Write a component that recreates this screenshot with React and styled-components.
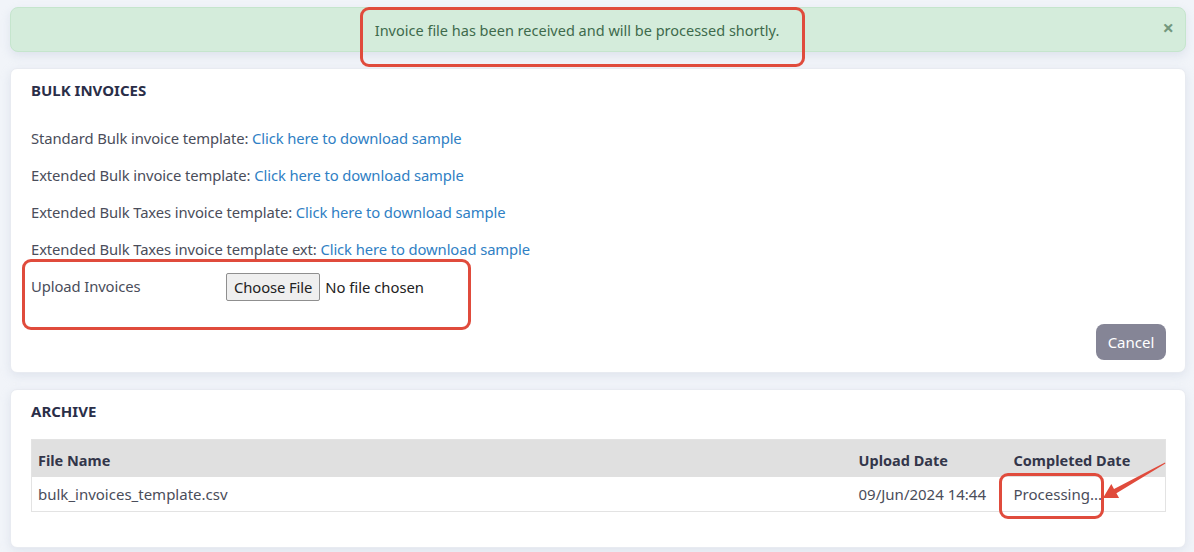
import React from 'react'
import styled, { createGlobalStyle } from 'styled-components'

const GlobalStyle = createGlobalStyle`
  html, body {
    margin: 0;
    padding: 0;
    background: #f1f4f9;
    font-family: "Noto Sans", "Open Sans", Arial, sans-serif;
    color: #4a4d5a;
  }
`

const Page = styled.div`
  position: relative;
  width: 1194px;
  height: 552px;
  padding: 7px 8px 0 10px;
  box-sizing: border-box;
  display: flex;
  flex-direction: column;
  gap: 16px;
`

const Alert = styled.div`
  height: 45px;
  box-sizing: border-box;
  background: #d4ecdb;
  border: 1px solid #c5e5cd;
  border-radius: 8px;
  display: flex;
  align-items: center;
  justify-content: center;
  padding: 0 56px 0 14px;
  position: relative;
  color: #3e6a4c;
  font-size: 14.5px;
  box-shadow: 0 4px 10px rgba(180, 190, 210, 0.3);
`

const Close = styled.span`
  position: absolute;
  right: 11px;
  top: 10px;
  font-size: 20px;
  font-weight: 700;
  color: #73987e;
  line-height: 1;
`

const Card = styled.div`
  background: #fff;
  border-radius: 7px;
  border: 1px solid #e8ebf1;
  box-shadow: 0 3px 10px rgba(190, 198, 215, 0.35);
  padding: 11px 19px 12px 20px;
  display: flex;
  flex-direction: column;
  height: ${p => p.$h}px;
  box-sizing: border-box;
`

const Title = styled.h3`
  margin: 0;
  font-size: 15px;
  font-weight: 700;
  color: #2a2e48;
`

const Lines = styled.div`
  margin-top: 28px;
  display: flex;
  flex-direction: column;
  gap: 17px;
  font-size: 14.8px;
  line-height: 20px;
`

const Line = styled.div`
  letter-spacing: -0.1px;
`

const Link = styled.a`
  color: #2f80c4;
  text-decoration: none;
`

const UploadRow = styled.div`
  display: flex;
  align-items: flex-start;
`

const UploadLabel = styled.div`
  width: 195px;
  letter-spacing: -0.1px;
`

const FileInput = styled.div`
  display: flex;
  align-items: center;
  gap: 5px;
  margin-top: -3px;
  color: #222;
`

const FileButton = styled.button`
  font-family: inherit;
  font-size: 14.8px;
  color: #222;
  background: #efefef;
  border: 1px solid #8f8f8f;
  border-radius: 2px;
  height: 28px;
  padding: 0 7px;
  letter-spacing: -0.1px;
`

const Footer = styled.div`
  display: flex;
  justify-content: flex-end;
  margin-top: auto;
`

const CancelButton = styled.button`
  font-family: inherit;
  font-size: 15px;
  color: #fff;
  background: #858596;
  border: none;
  border-radius: 8px;
  width: 70px;
  height: 36px;
`

const Table = styled.table`
  margin-top: 18px;
  width: 100%;
  border-collapse: collapse;
  font-size: 15px;
  border: 1px solid #e3e3e3;
`

const Th = styled.th`
  background: #e0e0e0;
  text-align: left;
  font-weight: 700;
  font-size: 14.5px;
  color: #33364a;
  height: 37px;
  padding: 3px 6px 0;
  box-sizing: border-box;
  width: ${p => p.$w || 'auto'};
`

const Td = styled.td`
  height: 34px;
  padding: 0 6px;
  color: #4a4d5a;
`

const Mark = styled.div`
  position: absolute;
  border: 3px solid #e04b3c;
  border-radius: 9px;
  box-sizing: border-box;
  left: ${p => p.$x}px;
  top: ${p => p.$y}px;
  width: ${p => p.$w}px;
  height: ${p => p.$h}px;
  pointer-events: none;
`

const Arrow = styled.svg`
  position: absolute;
  left: 1096px;
  top: 455px;
  pointer-events: none;
`

export default function App() {
  return (
    <Page>
      <GlobalStyle />
      <Alert>
        Invoice file has been received and will be processed shortly.
        <Close>×</Close>
      </Alert>

      <Card $h={305}>
        <Title>BULK INVOICES</Title>
        <Lines>
          <Line>Standard Bulk invoice template: <Link href="#">Click here to download sample</Link></Line>
          <Line>Extended Bulk invoice template: <Link href="#">Click here to download sample</Link></Line>
          <Line>Extended Bulk Taxes invoice template: <Link href="#">Click here to download sample</Link></Line>
          <Line>Extended Bulk Taxes invoice template ext: <Link href="#">Click here to download sample</Link></Line>
          <UploadRow>
            <UploadLabel>Upload Invoices</UploadLabel>
            <FileInput>
              <FileButton>Choose File</FileButton>
              <span>No file chosen</span>
            </FileInput>
          </UploadRow>
        </Lines>
        <Footer>
          <CancelButton>Cancel</CancelButton>
        </Footer>
      </Card>

      <Card $h={159}>
        <Title>ARCHIVE</Title>
        <Table>
          <thead>
            <tr>
              <Th>File Name</Th>
              <Th $w="155px">Upload Date</Th>
              <Th $w="158px">Completed Date</Th>
            </tr>
          </thead>
          <tbody>
            <tr>
              <Td>bulk_invoices_template.csv</Td>
              <Td>09/Jun/2024 14:44</Td>
              <Td>Processing...</Td>
            </tr>
          </tbody>
        </Table>
      </Card>

      <Mark $x={360} $y={7} $w={445} $h={60} />
      <Mark $x={22} $y={259} $w={449} $h={71} />
      <Mark $x={999} $y={473} $w={105} $h={46} />
      <Arrow width="72" height="52" viewBox="0 0 72 52">
        <path d="M69 7.6 L18 33.9 L15.3 29.1 L7 43 L23.1 43.1 L20.4 38.3 L69.4 8.4 Z" fill="#e04b3c" />
      </Arrow>
    </Page>
  )
}
